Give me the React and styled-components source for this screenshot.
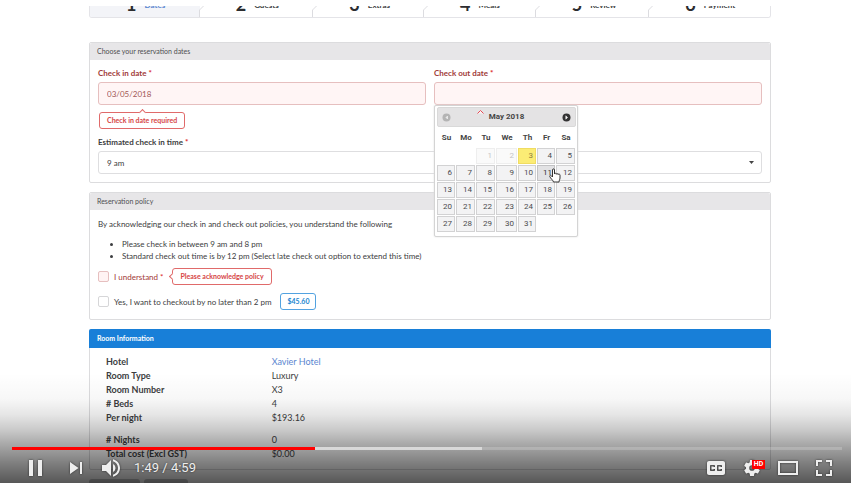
import React from "react";
import styled, { createGlobalStyle, css } from "styled-components";

const GlobalStyle = createGlobalStyle`
  *, *::before, *::after { box-sizing: border-box; }
  body { margin: 0; background: #fff; }
  button, input, select { font: inherit; color: inherit; }
`;

const Player = styled.div`
  position: relative;
  height: 100vh;
  overflow: hidden;
  background: #fff;
  color: #3c3d40;
  font: 8px/14px Lato, "Open Sans", sans-serif;
`;

const Page = styled.main`
  padding: 6px 80px 0 89px;
`;

/* ---------- stepper ---------- */

const Steps = styled.nav`
  display: grid;
  grid-template-columns: 110fr 114fr 111fr 112fr 114fr 121fr;
  grid-template-rows: 100%;
  height: 12px;
  overflow: hidden;
  border: 1px solid #e4e4e8;
  border-top: 0;
  border-radius: 0 0 3px 3px;
  margin-bottom: 24px;
`;

const Step = styled.a`
  display: flex;
  position: relative;
  align-items: flex-end;
  gap: 8px;
  min-height: 0;
  padding: 0 0 3px 36px;
  color: #2c2d30;
  text-decoration: none;
  background: ${(p) => (p.$active ? "#f3f4f8" : "#fff")};
`;

const StepNumber = styled.span`
  font-size: 18px;
  line-height: 20px;
  font-weight: 700;
`;

const StepTitle = styled.span`
  line-height: 18px;
  font-weight: 700;
  color: ${(p) => (p.$active ? "#5b86d0" : "#3c3d40")};
`;

const StepNotch = styled.svg`
  position: absolute;
  right: -5px;
  top: 0;
  z-index: 1;
`;

/* ---------- panels ---------- */

const Panel = styled.section`
  border: 1px solid #dcdcde;
  border-radius: 2px;
  margin-bottom: 9px;
`;

const PanelTitle = styled.h2`
  margin: ${(p) => (p.$primary ? "-1px -1px 0" : "0")};
  padding: ${(p) => (p.$primary ? "0 8px" : "0 7px")};
  font-size: 7px;
  line-height: ${(p) => (p.$primary ? "19px" : "17px")};
  font-weight: ${(p) => (p.$primary ? 700 : 400)};
  color: ${(p) => (p.$primary ? "#fff" : "#4e4e51")};
  background: ${(p) => (p.$primary ? "#187fd8" : "#e7e6e8")};
  border-radius: 2px 2px 0 0;
`;

const PanelBody = styled.div`
  padding: 6px 8px 8px;
`;

const Columns = styled.div`
  display: grid;
  grid-template-columns: 1fr 1fr;
  gap: 8px;
  margin-bottom: 6px;
`;

const Field = styled.div`
  position: relative;
`;

const FieldLabel = styled.label`
  display: block;
  height: 16px;
  font-weight: 700;
  color: ${(p) => (p.$error ? "#9f3a38" : "#3c3d40")};
`;

const Star = styled.span`
  color: #db2828;
  margin-left: 2px;
`;

const control = css`
  display: block;
  width: 100%;
  height: 23px;
  padding: 0 8px;
  border-radius: 3px;
  outline: 0;
`;

const DateInput = styled.input`
  ${control}
  border: 1px solid #e6bfbf;
  background: #fff5f5;
  color: #9f5755;
`;

const SelectWrap = styled.div`
  display: grid;
  align-items: center;
  > * { grid-area: 1 / 1; }
  > svg { justify-self: end; margin-right: 8px; pointer-events: none; }
`;

const TimeSelect = styled.select`
  ${control}
  appearance: none;
  border: 1px solid #dedee0;
  background: #fff;
`;

const ErrorTag = styled.span`
  display: inline-block;
  position: relative;
  padding: 0 7px;
  border: 1px solid #e06a6a;
  border-radius: 3px;
  background: #fff;
  color: #d64545;
  font-size: 7px;
  line-height: 15px;
  font-weight: 700;
  margin: ${(p) => (p.$side === "left" ? "0 0 0 9px" : "7px 0 0 1px")};

  &::before {
    content: "";
    position: absolute;
    width: 5px;
    height: 5px;
    background: #fff;
    border: solid #e06a6a;
    border-width: 1px 0 0 1px;
    ${(p) =>
      p.$side === "left"
        ? "left: -3px; top: 5px; transform: rotate(-45deg);"
        : "top: -3px; left: 40px; transform: rotate(45deg);"}
  }
`;

/* ---------- calendar ---------- */

const Calendar = styled.div`
  position: absolute;
  z-index: 2;
  top: 39px;
  left: 0;
  width: 144px;
  padding: 1px 1px 3px 2px;
  background: #fff;
  border: 1px solid #d4d4d4;
  border-radius: 2px;
  box-shadow: 0 0 2px #ddd;
  color: #454545;
  font: 8px/14px Roboto, Arial, sans-serif;
`;

const CalendarHead = styled.div`
  display: flex;
  position: relative;
  align-items: center;
  justify-content: space-between;
  height: 20px;
  padding: 0 4px;
  background: #e4e3e4;
  border: 1px solid #d9d9d9;
  border-radius: 2px;
  font-weight: 700;
`;

const CalendarCaret = styled.svg`
  position: absolute;
  left: 39px;
  top: 1px;
`;

const MonthNav = styled.button`
  display: flex;
  padding: 0;
  border: 0;
  background: none;
  color: #333;
  &:disabled { color: #b4b4b4; }
`;

const Month = styled.table`
  width: 100%;
  table-layout: fixed;
  border-collapse: separate;
  border-spacing: 0;
  th { height: 21px; padding: 0; font-weight: 700; }
  td { height: 17px; padding: 0 1px 1px 0; }
`;

const Day = styled.button`
  display: block;
  width: 100%;
  height: 16px;
  padding: 0 2px 0 0;
  text-align: right;
  line-height: 14px;
  border: 1px solid #d2d2d3;
  background: #f3f3f4;
  color: #4b4b4e;

  ${(p) => p.$today && "background: #fbec75; border-color: #f0dc62; color: #8c8040;"}
  ${(p) => p.$hover && "background: #e2e2e4; border-color: #c2c2c4; color: #333;"}
  &:disabled { background: #fafafa; border-color: #eee; color: #c4c4c6; }
`;

const HandCursor = styled.svg`
  position: absolute;
  left: 114px;
  top: 62px;
`;

/* ---------- policy ---------- */

const PolicyText = styled.p`
  margin: 1px 0 0;
`;

const PolicyList = styled.ul`
  margin: 7px 0 6px;
  padding-left: 24px;
  line-height: 12px;
`;

const CheckRow = styled.div`
  display: flex;
  align-items: center;
  height: 17px;
  margin-bottom: ${(p) => (p.$last ? "1px" : "8px")};
  color: ${(p) => (p.$error ? "#9f3a38" : "inherit")};
`;

const CheckBox = styled.input`
  appearance: none;
  width: 11px;
  height: 11px;
  margin: 0 5px 0 0;
  border: 1px solid ${(p) => (p.$error ? "#e6bfbf" : "#d6d6d8")};
  border-radius: 2px;
  background: ${(p) => (p.$error ? "#fff3f3" : "#fff")};
`;

const PriceTag = styled.span`
  margin-left: 9px;
  padding: 0 6px;
  border: 1px solid #52a2e0;
  border-radius: 3px;
  color: #2185d0;
  font-size: 7px;
  line-height: 15px;
  font-weight: 700;
`;

/* ---------- room info ---------- */

const RoomTable = styled.table`
  width: 100%;
  border-collapse: collapse;
  margin: 1px 0 0;
  font-size: 9px;
  th { width: 26%; padding: 0 0 0 8px; text-align: left; font-weight: 700; }
  td { padding: 0 0 0 1px; }
  tr.total th, tr.total td { padding-top: 8px; }
`;

const RoomLink = styled.a`
  color: #5b86d0;
  text-decoration: none;
`;

const Actions = styled.div`
  display: flex;
  gap: 4px;
`;

const ActionButton = styled.button`
  width: ${(p) => (p.$wide ? "51px" : "44px")};
  height: 20px;
  border: 0;
  border-radius: 3px;
  background: #c4c5c7;
`;

/* ---------- video controls ---------- */

const Shade = styled.div`
  position: absolute;
  z-index: 3;
  inset: auto 0 0;
  height: 110px;
  pointer-events: none;
  background: linear-gradient(
    to bottom,
    rgba(0, 0, 0, 0) 0,
    rgba(0, 0, 0, 0.03) 26px,
    rgba(0, 0, 0, 0.1) 42px,
    rgba(0, 0, 0, 0.21) 57px,
    rgba(0, 0, 0, 0.33) 70px,
    rgba(0, 0, 0, 0.5) 90px,
    rgba(0, 0, 0, 0.66) 110px
  );
`;

const Controls = styled.div`
  position: absolute;
  z-index: 4;
  inset: auto 9px 0 12px;
  color: #eee;
`;

const Track = styled.div`
  display: flex;
  height: 3px;
  background: rgba(255, 255, 255, 0.2);
`;

const Played = styled.div`
  background: #f00;
`;

const Loaded = styled.div`
  background: rgba(255, 255, 255, 0.5);
`;

const Bar = styled.div`
  display: flex;
  align-items: center;
  height: 33px;
  padding: 2px 0 0 5px;
`;

const IconButton = styled.button`
  display: flex;
  position: relative;
  width: 36px;
  height: 36px;
  padding: 0;
  border: 0;
  background: none;
  margin-right: ${(p) => (p.$spaced ? "5px" : 0)};
  svg { filter: drop-shadow(0 0 1px rgba(0, 0, 0, 0.6)); }
`;

const Time = styled.span`
  margin: 0 auto 0 4px;
  font: 13px/31px Roboto, sans-serif;
  text-shadow: 0 0 2px rgba(0, 0, 0, 0.6);
`;

const Badge = styled.span`
  position: absolute;
  left: 18px;
  top: 10px;
  width: 13px;
  height: 9px;
  background: #f00;
  color: #fff;
  font: 700 7px/9px Roboto, sans-serif;
  text-align: center;
`;

/* ---------- data ---------- */

const steps = ["Dates", "Guests", "Extras", "Meals", "Review", "Payment"];
const weekdays = ["Su", "Mo", "Tu", "We", "Th", "Fr", "Sa"];
const columnWidths = [19, 20, 20, 22, 19, 19, 20];
const weeks = [0, 1, 2, 3, 4].map((w) =>
  weekdays.map((_, d) => {
    const n = w * 7 + d - 1;
    return n >= 1 && n <= 31 ? n : null;
  })
);
const room = [
  ["Hotel", <RoomLink href="#hotel">Xavier Hotel</RoomLink>],
  ["Room Type", "Luxury"],
  ["Room Number", "X3"],
  ["# Beds", "4"],
  ["Per night", "$193.16"],
  ["# Nights", "0", true],
  ["Total cost (Excl GST)", "$0.00"],
];

const icons = {
  pause: "M12 26h4V10h-4zM21 26h4V10h-4z",
  next: "M12 24l8.500-6L12 12zM22 12v12h2V12z",
  volume:
    "M8 21h4l5 5V10l-5 5H8zM19 14v8c1.480-.68 2.500-2.230 2.500-4s-1.020-3.260-2.500-4zM19 11.290c2.890.86 5 3.540 5 6.710s-2.110 5.850-5 6.710v2.060c4.010-.91 7-4.490 7-8.770s-2.990-7.860-7-8.770z",
  captions:
    "M11 11c-1.110 0-2 .9-2 2v10c0 1.100.89 2 2 2h14c1.100 0 2-.9 2-2V13c0-1.100-.9-2-2-2zM17 17h-1.500v-.5h-2v3h2V19H17v1c0 .55-.45 1-1 1h-3c-.55 0-1-.45-1-1v-4c0-.55.45-1 1-1h3c.55 0 1 .45 1 1zM24 17h-1.500v-.5h-2v3h2V19H24v1c0 .55-.45 1-1 1h-3c-.55 0-1-.45-1-1v-4c0-.55.45-1 1-1h3c.55 0 1 .45 1 1z",
  settings:
    "m23.940 18.780c.03-.25.05-.51.05-.78 0-.27-.02-.52-.05-.78l1.680-1.320c.15-.12.19-.33.09-.51l-1.600-2.760c-.09-.17-.31-.24-.48-.17l-1.990.8c-.41-.32-.86-.58-1.350-.78l-.3-2.120c-.02-.19-.19-.33-.39-.33h-3.200c-.2 0-.36.14-.39.33l-.3 2.120c-.48.2-.93.47-1.350.78l-1.990-.8c-.18-.07-.39 0-.48.17l-1.600 2.760c-.1.17-.05.39.09.51l1.680 1.320c-.03.25-.05.52-.05.78s.02.52.05.78l-1.680 1.320c-.15.12-.19.33-.09.51l1.600 2.760c.09.17.31.24.48.17l1.990-.8c.41.32.86.58 1.350.78l.3 2.120c.02.19.19.33.39.33h3.200c.2 0 .36-.14.39-.33l.3-2.120c.48-.2.93-.47 1.350-.78l1.990.8c.18.07.39 0 .48-.17l1.600-2.760c.09-.17.05-.39-.09-.51zm-5.940 2.010a2.800 2.800 0 1 1 0-5.600 2.800 2.800 0 0 1 0 5.600z",
  theater: "M28 11v14H8V11zM10 13v10h16V13z",
  fullscreen:
    "M10 16h2v-4h4v-2h-6zM20 10v2h4v4h2v-6zM24 24h-4v2h6v-6h-2zM12 20h-2v6h6v-2h-4z",
};

function Control({ name, label, spaced, children }) {
  return (
    <IconButton type="button" aria-label={label} $spaced={spaced}>
      <svg width="36" height="36" viewBox="0 0 36 36" fill="currentColor" aria-hidden="true">
        <path d={icons[name]} fillRule="evenodd" />
      </svg>
      {children}
    </IconButton>
  );
}

function Chevron({ back }) {
  return (
    <svg width="9" height="9" viewBox="0 0 9 9" aria-hidden="true">
      <circle cx="4.500" cy="4.500" r="4" fill="currentColor" />
      <path d={back ? "M5.500 3l-1.500 1.500 1.500 1.500z" : "M3.800 2.800l1.800 1.700-1.800 1.700z"} fill="#f4f4f4" stroke="#f4f4f4" strokeWidth=".6" />
    </svg>
  );
}

function DatePicker() {
  return (
    <Calendar>
      <CalendarHead>
        <MonthNav type="button" aria-label="Previous month" disabled><Chevron back /></MonthNav>
        <span>May 2018</span>
        <MonthNav type="button" aria-label="Next month"><Chevron /></MonthNav>
        <CalendarCaret width="7" height="5" viewBox="0 0 7 5" aria-hidden="true">
          <path d="M.5 4.500l3-3 3 3" fill="#f8f4f4" stroke="#e84a55" />
        </CalendarCaret>
      </CalendarHead>
      <Month>
        <colgroup>
          {columnWidths.map((w, i) => <col key={i} width={w} />)}
        </colgroup>
        <thead>
          <tr>{weekdays.map((d) => <th key={d} scope="col">{d}</th>)}</tr>
        </thead>
        <tbody>
          {weeks.map((week, i) => (
            <tr key={i}>
              {week.map((n, d) => (
                <td key={d}>
                  {n && <Day type="button" disabled={n < 3} $today={n === 3} $hover={n === 11}>{n}</Day>}
                </td>
              ))}
            </tr>
          ))}
        </tbody>
      </Month>
      <HandCursor width="12" height="15" viewBox="0 0 12 15" aria-hidden="true">
        <path
          d="M3.500 9V2c0-1.500 2-1.500 2 0v4c0-1 1.800-1 1.800.2 0-1 1.800-.9 1.800.4 0-.9 1.900-.8 1.900.5V10c0 1.500-.8 2-1 4H4.500C4 12 1.500 10.500.8 8.500c-.4-1.300 1-1.600 1.700-.6z"
          fill="#fff"
          stroke="#333"
        />
      </HandCursor>
    </Calendar>
  );
}

export default function App() {
  return (
    <Player>
      <GlobalStyle />
      <Page>
        <Steps aria-label="Booking steps">
          {steps.map((title, i) => (
            <Step key={title} href={"#" + title.toLowerCase()} $active={i === 0}>
              <StepNumber>{i + 1}</StepNumber>
              <StepTitle $active={i === 0}>{title}</StepTitle>
              {i < 5 && (
                <StepNotch width="6" height="12" viewBox="0 0 6 12" aria-hidden="true">
                  <path d="M.5 12V4L4.500 0" fill="none" stroke="#dcdce0" />
                </StepNotch>
              )}
            </Step>
          ))}
        </Steps>

        <Panel>
          <PanelTitle>Choose your reservation dates</PanelTitle>
          <PanelBody>
            <Columns>
              <Field>
                <FieldLabel htmlFor="check-in" $error>Check in date<Star>*</Star></FieldLabel>
                <DateInput id="check-in" defaultValue="03/05/2018" />
                <ErrorTag>Check in date required</ErrorTag>
              </Field>
              <Field>
                <FieldLabel htmlFor="check-out" $error>Check out date<Star>*</Star></FieldLabel>
                <DateInput id="check-out" />
                <DatePicker />
              </Field>
            </Columns>
            <FieldLabel htmlFor="time">Estimated check in time<Star>*</Star></FieldLabel>
            <SelectWrap>
              <TimeSelect id="time" defaultValue="9 am">
                <option>9 am</option>
              </TimeSelect>
              <svg width="5" height="3" viewBox="0 0 5 3" aria-hidden="true"><path d="M0 0h5L2.500 3z" fill="#444" /></svg>
            </SelectWrap>
          </PanelBody>
        </Panel>

        <Panel>
          <PanelTitle>Reservation policy</PanelTitle>
          <PanelBody>
            <PolicyText>By acknowledging our check in and check out policies, you understand the following</PolicyText>
            <PolicyList>
              <li>Please check in between 9 am and 8 pm</li>
              <li>Standard check out time is by 12 pm (Select late check out option to extend this time)</li>
            </PolicyList>
            <CheckRow $error>
              <CheckBox type="checkbox" id="agree" $error />
              <label htmlFor="agree">I understand<Star>*</Star></label>
              <ErrorTag $side="left">Please acknowledge policy</ErrorTag>
            </CheckRow>
            <CheckRow $last>
              <CheckBox type="checkbox" id="late" />
              <label htmlFor="late">Yes, I want to checkout by no later than 2 pm</label>
              <PriceTag>$45.60</PriceTag>
            </CheckRow>
          </PanelBody>
        </Panel>

        <Panel>
          <PanelTitle $primary>Room Information</PanelTitle>
          <PanelBody>
            <RoomTable>
              <tbody>
                {room.map(([name, value, total]) => (
                  <tr key={name} className={total ? "total" : undefined}>
                    <th scope="row">{name}</th>
                    <td>{value}</td>
                  </tr>
                ))}
              </tbody>
            </RoomTable>
          </PanelBody>
        </Panel>

        <Actions>
          <ActionButton type="button" aria-label="Previous" $wide />
          <ActionButton type="button" aria-label="Next" />
        </Actions>
      </Page>

      <Shade />
      <Controls>
        <Track role="progressbar" aria-label="Playback" aria-valuenow={109} aria-valuemax={299}>
          <Played style={{ width: (109 / 299) * 100 + "%" }} />
          <Loaded style={{ width: "20.2%" }} />
        </Track>
        <Bar>
          <Control name="pause" label="Pause" spaced />
          <Control name="next" label="Next video" />
          <Control name="volume" label="Mute" />
          <Time>1:49 / 4:59</Time>
          <Control name="captions" label="Subtitles" />
          <Control name="settings" label="Settings"><Badge>HD</Badge></Control>
          <Control name="theater" label="Theater mode" />
          <Control name="fullscreen" label="Full screen" />
        </Bar>
      </Controls>
    </Player>
  );
}
